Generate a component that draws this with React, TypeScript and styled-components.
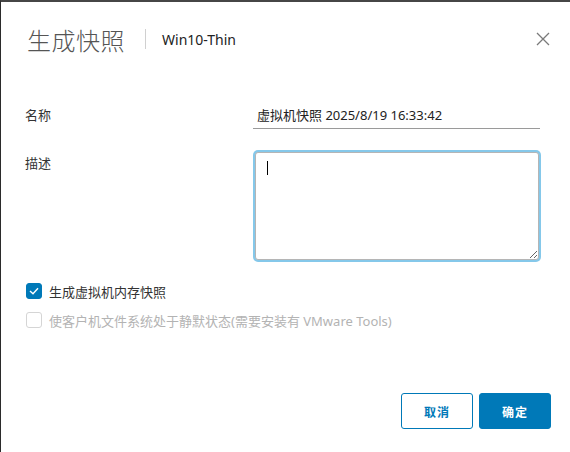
import styled, { createGlobalStyle } from "styled-components";

const GlobalStyle = createGlobalStyle`
  html, body {
    margin: 0;
    padding: 0;
    background: #fff;
  }
  body {
    font-family: "Noto Sans", "Noto Sans CJK SC", sans-serif;
  }
`;

const Modal = styled.div`
  width: 570px;
  height: 452px;
  box-sizing: border-box;
  border-top: 2px solid #464646;
  border-left: 1px solid #2b2b2b;
  background: #fff;
  display: flex;
  flex-direction: column;
`;

const Header = styled.div`
  display: flex;
  align-items: center;
  height: 34px;
  padding: 20px 20px 0 26px;
`;

const Title = styled.h3`
  margin: 0;
  font-family: "Noto Sans CJK SC", sans-serif;
  font-size: 24px;
  font-weight: 300;
  color: #555;
  letter-spacing: 0.5px;
`;

const Divider = styled.span`
  width: 1px;
  height: 20px;
  background: #d0d0d0;
  margin: 0 16px 0 20px;
`;

const Subtitle = styled.span`
  font-size: 14px;
  color: #222;
`;

const CloseButton = styled.button`
  margin-left: auto;
  border: none;
  background: none;
  padding: 0;
  width: 14px;
  height: 14px;
  display: flex;
  cursor: pointer;
`;

const Form = styled.div`
  display: flex;
  flex-direction: column;
  padding: 49px 30px 0 24px;
`;

const Row = styled.div<{ $gap?: number }>`
  display: grid;
  grid-template-columns: 228px 1fr;
  align-items: start;
  margin-bottom: ${(p) => p.$gap ?? 0}px;
`;

const Label = styled.label<{ $top: number }>`
  font-size: 13px;
  color: #333;
  padding-top: ${(p) => p.$top}px;
  line-height: 18px;
`;

const TextInput = styled.div`
  height: 23px;
  border-bottom: 1px solid #9a9a9a;
  font-size: 13px;
  color: #222;
  line-height: 20px;
  padding-left: 4px;
  box-sizing: content-box;
`;

const AreaWrap = styled.div`
  position: relative;
  width: 288px;
  height: 112px;
`;

const Area = styled.textarea`
  box-sizing: border-box;
  width: 284px;
  height: 108px;
  margin: 2px;
  border: 1px solid #b5b5b5;
  border-radius: 3px;
  box-shadow: 0 0 0 2px #85c8ea;
  outline: none;
  resize: both;
  font-size: 13px;
  display: block;
`;

const Caret = styled.span`
  position: absolute;
  left: 14px;
  top: 11px;
  width: 1px;
  height: 14px;
  background: #000;
`;

const Checks = styled.div`
  display: flex;
  flex-direction: column;
  gap: 9px;
  margin-top: 19px;
  padding-left: 1px;
`;

const CheckRow = styled.label<{ $disabled?: boolean }>`
  display: flex;
  align-items: center;
  gap: 7px;
  height: 20px;
  font-size: 13px;
  color: ${(p) => (p.$disabled ? "#b3b3b3" : "#333")};
`;

const Box = styled.span<{ $checked?: boolean }>`
  width: 16px;
  height: 16px;
  box-sizing: border-box;
  border-radius: 3px;
  border: 1px solid ${(p) => (p.$checked ? "#0079b8" : "#d5d5d5")};
  background: ${(p) => (p.$checked ? "#0079b8" : "#fff")};
  display: flex;
  align-items: center;
  justify-content: center;
`;

const Footer = styled.div`
  margin-top: auto;
  display: flex;
  justify-content: flex-end;
  gap: 6px;
  padding: 0 19px 23px 0;
`;

const Button = styled.button<{ $primary?: boolean }>`
  width: 72px;
  height: 36px;
  border-radius: 3px;
  border: 1px solid #0079b8;
  background: ${(p) => (p.$primary ? "#0079b8" : "#fff")};
  color: ${(p) => (p.$primary ? "#fff" : "#0079b8")};
  font-family: "Noto Sans CJK SC", sans-serif;
  font-size: 12px;
  font-weight: 700;
  letter-spacing: 1px;
  cursor: pointer;
`;

export default function App() {
  return (
    <>
      <GlobalStyle />
      <Modal>
        <Header>
          <Title>生成快照</Title>
          <Divider />
          <Subtitle>Win10-Thin</Subtitle>
          <CloseButton aria-label="关闭">
            <svg width="14" height="14" viewBox="0 0 14 14">
              <path d="M1 1L13 13M13 1L1 13" stroke="#7a7a7a" strokeWidth="1.3" fill="none" />
            </svg>
          </CloseButton>
        </Header>
        <Form>
          <Row $gap={21}>
            <Label $top={1}>名称</Label>
            <TextInput>虚拟机快照 2025/8/19 16:33:42</TextInput>
          </Row>
          <Row>
            <Label $top={4}>描述</Label>
            <AreaWrap>
              <Area readOnly />
              <Caret />
            </AreaWrap>
          </Row>
          <Checks>
            <CheckRow>
              <Box $checked>
                <svg width="10" height="8" viewBox="0 0 10 8">
                  <path d="M1 4L4 6.8L9 1.2" stroke="#fff" strokeWidth="1.4" fill="none" />
                </svg>
              </Box>
              生成虚拟机内存快照
            </CheckRow>
            <CheckRow $disabled>
              <Box />
              使客户机文件系统处于静默状态(需要安装有 VMware Tools)
            </CheckRow>
          </Checks>
        </Form>
        <Footer>
          <Button>取消</Button>
          <Button $primary>确定</Button>
        </Footer>
      </Modal>
    </>
  );
}
